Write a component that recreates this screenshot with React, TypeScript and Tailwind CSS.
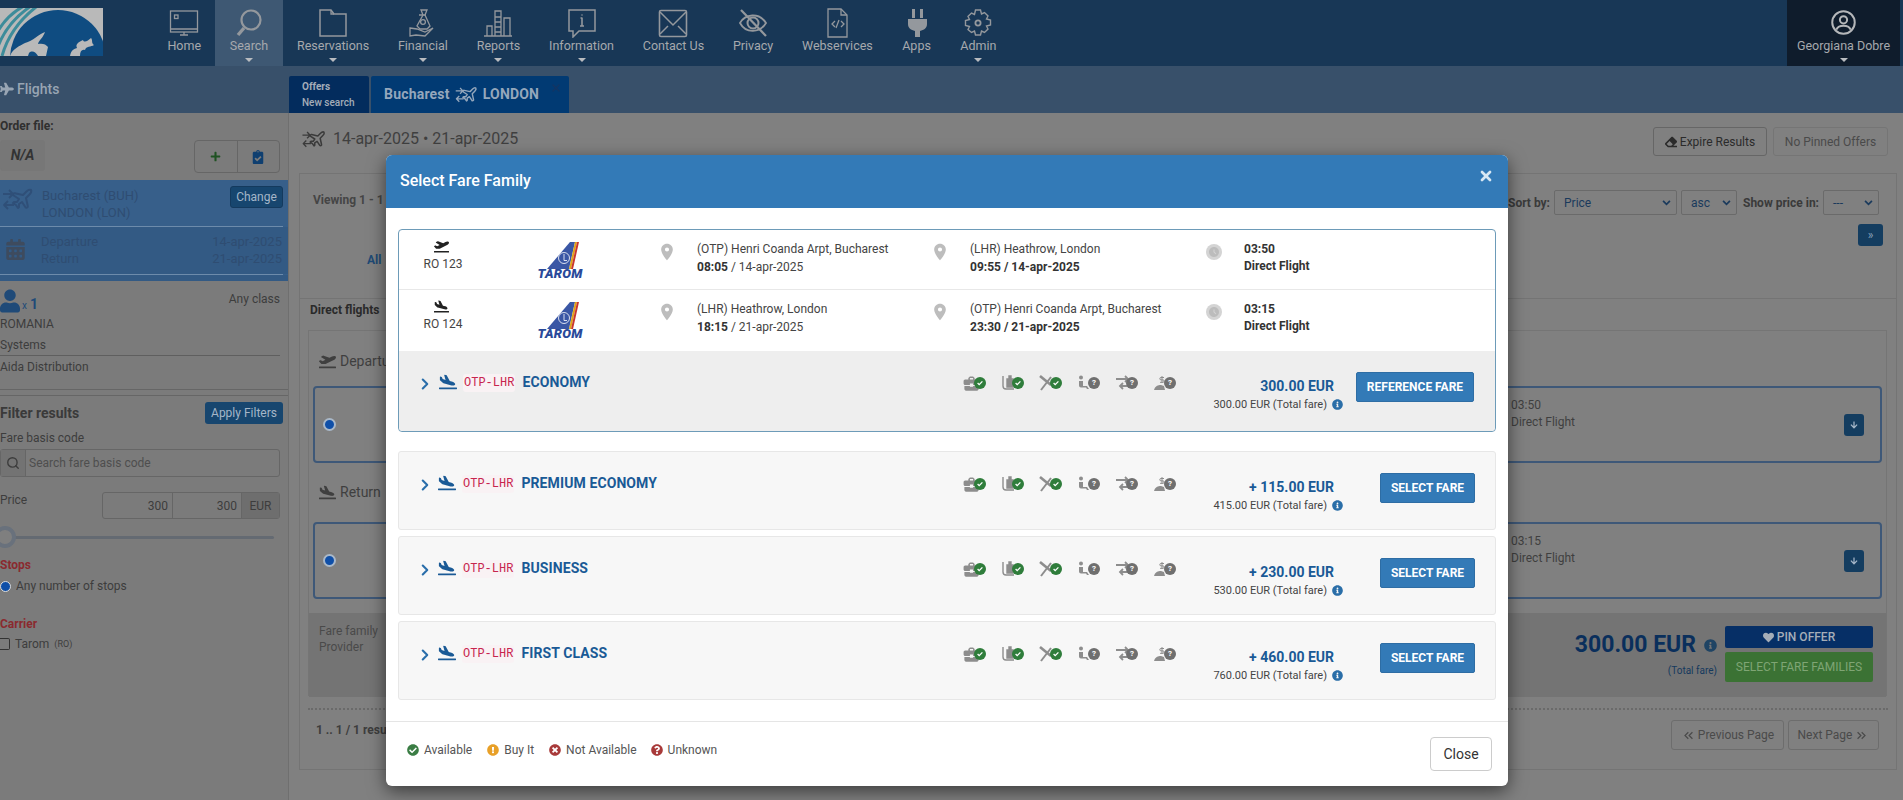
import type { ReactNode } from "react";
import { ChevronRight, Search, X } from "lucide-react";
import {
  FaArrowDown,
  FaCalendarAlt,
  FaCheckCircle,
  FaClipboardCheck,
  FaEraser,
  FaExclamationCircle,
  FaHeart,
  FaInfoCircle,
  FaPlane,
  FaPlaneArrival,
  FaPlaneDeparture,
  FaPlus,
  FaQuestionCircle,
  FaTimesCircle,
  FaUser,
} from "react-icons/fa";
import {
  MdAccessTimeFilled,
  MdBusinessCenter,
  MdKeyboardDoubleArrowLeft,
  MdKeyboardDoubleArrowRight,
  MdPlace,
} from "react-icons/md";

function Line({ children }: { children: ReactNode }) {
  return (
    <svg viewBox="0 0 30 30" className="h-[30px] w-[30px]" fill="none" stroke="currentColor" strokeWidth="1.3">
      {children}
    </svg>
  );
}

const navItems: { label: string; caret?: boolean; active?: boolean; icon: ReactNode }[] = [
  {
    label: "Home",
    icon: (
      <Line>
        <rect x="1.5" y="3" width="27" height="21" />
        <path d="M1.5 21h27M11 27h8M15 24v3" />
        <rect x="5.5" y="7" width="3.5" height="3.5" />
      </Line>
    ),
  },
  {
    label: "Search",
    caret: true,
    active: true,
    icon: (
      <Line>
        <circle cx="17" cy="12" r="9.5" strokeWidth="2.2" />
        <path d="M10 20l-6 7" strokeWidth="3.4" />
      </Line>
    ),
  },
  {
    label: "Reservations",
    caret: true,
    icon: (
      <Line>
        <path d="M2 28V2h11l3 4h12v22z" strokeWidth="1.5" />
        <path d="M13 2v4h3" />
      </Line>
    ),
  },
  {
    label: "Financial",
    caret: true,
    icon: (
      <Line>
        <path d="M13 2l6 0-2 5 5 11-3 3h-7l-3-3 6-11z" />
        <path d="M11 7h7M2 20l7 1 8 3 8-4-8 8-9-1-6 1z" />
        <circle cx="15" cy="14" r="2.4" />
      </Line>
    ),
  },
  {
    label: "Reports",
    caret: true,
    icon: (
      <Line>
        <path d="M1 28h28M4 28V18h5v10M12 28V3h6v25M21 28V10h6v18" />
        <path d="M12 9h6M12 14h6M12 19h6M12 24h6" />
      </Line>
    ),
  },
  {
    label: "Information",
    caret: true,
    icon: (
      <Line>
        <path d="M2 2h26v21H12l-6 6v-6H2z" strokeWidth="1.5" />
        <path d="M15 10v8M13 18h4M13.5 10h2M15 6.5v1" strokeWidth="1.6" />
      </Line>
    ),
  },
  {
    label: "Contact Us",
    icon: (
      <Line>
        <rect x="1.5" y="2.5" width="27" height="26" rx="1.5" strokeWidth="1.6" />
        <path d="M2 4l13 13L28 4M2 26l8-8M28 26l-8-8" strokeWidth="1.5" />
      </Line>
    ),
  },
  {
    label: "Privacy",
    icon: (
      <Line>
        <path d="M2 15c5-9 19-11 26 0-6 10-20 11-26 0z" strokeWidth="1.8" />
        <circle cx="15" cy="15" r="5.5" strokeWidth="2" />
        <path d="M3 2l25 26" strokeWidth="2.2" />
      </Line>
    ),
  },
  {
    label: "Webservices",
    icon: (
      <Line>
        <path d="M6 1h13l6 6v22H6z" />
        <path d="M19 1v6h6M13 13l-3 3 3 3M19 13l3 3-3 3M17 12l-3 8" />
      </Line>
    ),
  },
  {
    label: "Apps",
    icon: (
      <svg viewBox="0 0 30 30" className="h-[30px] w-[30px]" fill="currentColor">
        <path d="M10 1h3v9h-3zM18 1h3v9h-3zM6 11h19v5c0 4-3 6-7 7v6h-5v-6c-4-1-7-3-7-7z" />
      </svg>
    ),
  },
  {
    label: "Admin",
    caret: true,
    icon: (
      <Line>
        <path
          d="M12.5 2h5l1 4 3-1.500 3.500 3.500-1.500 3 4 1v5l-4 1 1.500 3-3.500 3.500-3-1.500-1 4h-5l-1-4-3 1.500L5 21.500l1.500-3-4-1v-5l4-1-1.500-3L8.500 5l3 1.500z"
          strokeWidth="1.4"
        />
        <circle cx="15" cy="15" r="2.600" strokeWidth="1.8" />
      </Line>
    ),
  },
];

function Caret() {
  return <span className="mx-auto block h-0 w-0 border-x-[4px] border-t-[4px] border-x-transparent border-t-[#b9bcc0]" />;
}

function RoundTrip({ className }: { className: string }) {
  return (
    <svg viewBox="0 0 32 26" className={className} fill="none" stroke="currentColor" strokeWidth="2" strokeLinejoin="round">
      <path transform="translate(8 1)" d="M17.800 19.200 16 11l3.500-3.500C21 6 21.500 4 21 3c-1-.5-3 0-4.500 1.500L13 8 4.800 6.200c-.5-.1-.9.1-1.100.5l-.3.5c-.2.5-.1 1 .3 1.300L9 12l-2 3H4l-1 1 3 2 2 3 1-1v-3l3-2 3.500 5.300c.3.4.8.5 1.300.3l.5-.2c.4-.3.6-.7.5-1.200z" />
      <path d="M1 8h9M7 4l4 4-4 4M12 19H2M6 15l-4 4 4 4" strokeWidth="1.8" />
    </svg>
  );
}

function Logo() {
  return (
    <svg viewBox="0 0 103 48" className="h-12 w-[103px]">
      <rect width="103" height="48" fill="#b9b9b9" />
      <path d="M-12 48C-6 24 6 6 28 -4M-5 48C0 28 12 10 34 -4M2 48C7 30 18 12 40 -4" fill="none" stroke="#3d8c9a" strokeWidth="3" />
      <circle cx="58" cy="50" r="48" fill="#0f4c81" />
      <path d="M10 48c3-8 10-10 15-13 8-2 14-9 20-11-2 6-6 8-7 12 4-1 8 0 10 3l-2 9h-8c-2-4-6-6-9-3l-1 3z" fill="#b9b9b9" />
      <path d="M70 48c1-5 3-7 7-8-2-4 2-6 6-8 1 3 5 1 8-2 2 2 0 5 3 7-3 2-8 1-9 5-3-1-5 1-5 6z" fill="#b9b9b9" />
    </svg>
  );
}

function TopNav() {
  return (
    <div className="flex h-[66px] shrink-0 bg-[#183756] text-[#a6a9ad]">
      <div className="w-[153px] pt-2">
        <Logo />
      </div>
      <div className="flex flex-1">
        {navItems.map((item) => (
          <div key={item.label} className={`flex flex-col items-center px-[14.400px] pt-[9px] ${item.active ? "bg-[#3e5873]" : ""}`}>
            <div className="flex h-[27px] w-[30px] items-center justify-center text-[#94989d]">{item.icon}</div>
            <div className="mt-[2px] whitespace-nowrap text-[12.500px] leading-[15px]">{item.label}</div>
            {item.caret && <div className="mt-[5px]"><Caret /></div>}
          </div>
        ))}
      </div>
      <div className="mr-[3px] flex w-[113px] flex-col items-center bg-[#0f1c2c] pt-[9px]">
        <svg viewBox="0 0 30 30" className="h-[27px] w-[27px]" fill="none" stroke="#b5b7ba" strokeWidth="2.2">
          <circle cx="15" cy="15" r="12.500" />
          <circle cx="15" cy="12" r="4" />
          <path d="M7 23c2-6 14-6 16 0" />
        </svg>
        <div className="mt-[2px] whitespace-nowrap text-[12.500px] leading-[15px]">Georgiana Dobre</div>
        <div className="mt-[5px]"><Caret /></div>
      </div>
    </div>
  );
}

function SubBar() {
  return (
    <div className="flex h-[47px] shrink-0 bg-[#38506a]">
      <div className="flex w-[289px] items-center gap-[3px] pb-px text-[14px] font-medium text-[#98a5b3]">
        <FaPlane className="h-[14px] w-[14px]" />
        Flights
      </div>
      <div className="mt-[10px] flex h-[37px] w-[80px] flex-col justify-center rounded-t-[2px] bg-[#032c5d] pl-[13px] text-[10px] leading-[16px] text-[#a4adb8]">
        <span className="font-bold">Offers</span>
        <span className="font-medium">New search</span>
      </div>
      <div className="relative ml-[2px] mt-[10px] flex h-[37px] w-[198px] items-center gap-[5px] rounded-t-[2px] bg-[#013a73] pl-[13px] text-[14px] font-bold tracking-[0.2px] text-[#95a7bc]">
        Bucharest
        <RoundTrip className="h-[19px] w-[23px]" />
        LONDON
        <X className="absolute right-[7px] top-[6px] h-3 w-3 text-[#123564]" strokeWidth={3} />
      </div>
    </div>
  );
}

function Sidebar() {
  return (
    <aside className="w-[289px] shrink-0 border-r border-[#6f6f6f] bg-[#7b7b7b] text-[12px] text-[#3d3d3d]">
      <div className="pt-[6px] font-bold leading-[14px] text-[#2f2f2f]">Order file:</div>
      <div className="mt-[7px] flex items-start justify-between pr-[8px]">
        <div className="flex h-[31px] w-[45px] items-center justify-center rounded-[3px] border border-[#777] bg-[#777] text-[14px] font-bold italic text-[#333]">N/A</div>
        <div className="flex h-[33px] w-[86px] rounded-[4px] border border-[#666]">
          <div className="flex flex-1 items-center justify-center border-r border-[#666] text-[#1f5222]"><FaPlus className="h-[11px] w-[11px]" /></div>
          <div className="flex flex-1 items-center justify-center text-[#0f3f70]"><FaClipboardCheck className="h-[14px] w-[14px]" /></div>
        </div>
      </div>
      <div className="mt-[7px] h-[101px] bg-[#375f8a] text-[13px] leading-[17px] text-[#2f4d72]">
        <div className="flex h-[46px] items-start pl-0 pr-[5px] pt-[6px]">
          <RoundTrip className="h-[26px] w-[36px] text-[#2f4f78]" />
          <div className="ml-[6px] flex-1 pt-px">
            <div>Bucharest (BUH)</div>
            <div>LONDON (LON)</div>
          </div>
          <div className="flex h-[22px] w-[53px] items-center justify-center rounded-[3px] border border-[#143a5e] bg-[#17466f] text-[12px] text-[#a5b6c8]">Change</div>
        </div>
        <div className="mr-[5px] h-px bg-[#6d8bab]" />
        <div className="flex h-[47px] items-center bg-[#335a84] pb-[2px] pr-[6px]">
          <FaCalendarAlt className="ml-[5px] h-[21px] w-[21px] text-[#3e4b5e]" />
          <div className="ml-[15px] flex-1">
            <div>Departure</div>
            <div>Return</div>
          </div>
          <div className="text-right">
            <div>14-apr-2025</div>
            <div>21-apr-2025</div>
          </div>
        </div>
        <div className="mr-[5px] h-px bg-[#6d8bab]" />
        <div className="h-[6px] bg-[#335a84]" />
      </div>
      <div className="mt-[8px] flex items-start justify-between pr-[8px]">
        <div className="flex items-end">
          <FaUser className="h-[24px] w-[20px] text-[#1f4a78]" />
          <span className="ml-[2px] text-[10px] text-[#1f4a78]">x</span>
          <span className="ml-[3px] text-[14px] font-bold leading-[17px] text-[#1f4a78]">1</span>
        </div>
        <span className="pt-[1px]">Any class</span>
      </div>
      <div className="mt-[2px] leading-[18px]">ROMANIA</div>
      <div className="mr-[8px] mt-[3px] border-b border-[#5f5f5f] pb-[1px] leading-[18px]">Systems</div>
      <div className="mt-[2px] leading-[18px]">Aida Distribution</div>
      <div className="mt-[13px] h-[7px] border-y border-[#666]" />
      <div className="mt-[6px] flex items-center justify-between pr-[5px]">
        <span className="text-[14px] font-bold text-[#3a3a3a]">Filter results</span>
        <span className="flex h-[22px] w-[78px] items-center justify-center rounded-[3px] bg-[#17466f] text-[12px] text-[#a5b6c8]">Apply Filters</span>
      </div>
      <div className="mt-[6px] leading-[16px]">Fare basis code</div>
      <div className="mr-[8px] mt-[3px] flex h-[28px] rounded-[3px] border border-[#666]">
        <div className="flex w-[25px] items-center justify-center border-r border-[#666] bg-[#737373]"><Search className="h-[14px] w-[14px]" strokeWidth={2.4} /></div>
        <div className="flex flex-1 items-center pl-[3px] text-[#4e4e4e]">Search fare basis code</div>
      </div>
      <div className="mt-[15px] flex items-start justify-between pr-[8px]">
        <span className="-mt-[1px]">Price</span>
        <div className="flex h-[27px] w-[178px] rounded-[3px] border border-[#666]">
          <div className="flex w-[70px] items-center justify-end border-r border-[#666] pr-[4px]">300</div>
          <div className="flex w-[69px] items-center justify-end border-r border-[#666] pr-[4px]">300</div>
          <div className="flex flex-1 items-center justify-center bg-[#6e6e6e]">EUR</div>
        </div>
      </div>
      <div className="relative mr-[14px] mt-[17px] h-[3px] rounded-full bg-[#646a72]">
        <span className="absolute -left-[6px] -top-[10px] h-[22px] w-[22px] rounded-full border-[4px] border-[#69717c] bg-[#7f7f7f]" />
      </div>
      <div className="mt-[19px] font-bold leading-[14px] text-[#8a2a2f]">Stops</div>
      <div className="mt-[6px] flex items-center gap-[5px] leading-[16px]">
        <span className="h-[11px] w-[11px] rounded-full border border-[#ddd] bg-[#0f4fa8]" />
        Any number of stops
      </div>
      <div className="mt-[23px] font-bold leading-[14px] text-[#8a2a2f]">Carrier</div>
      <div className="mt-[5px] flex items-center gap-[5px] leading-[16px]">
        <span className="h-[12px] w-[10px] rounded-r-[2px] border border-l-0 border-[#333]" />
        Tarom <span className="text-[9px]">(RO)</span>
      </div>
    </aside>
  );
}

function ResultBox({ time, flight }: { time: string; flight: string }) {
  return (
    <div className="flex h-[77px] items-center justify-between rounded-[4px] border-2 border-[#3e5878] pl-[8px] pr-[16px]">
      <span className="h-[13px] w-[13px] rounded-full border-[2px] border-[#a9b8c9] bg-[#0f4fa8]" />
      <div className="flex items-center">
        <div className="mb-[22px] mr-[263px] w-[70px] text-[12px] leading-[17px] text-[#3f3f3f]">
          <div>{time}</div>
          <div>{flight}</div>
        </div>
        <span className="flex h-[22px] w-[20px] items-center justify-center rounded-[3px] bg-[#143d60] text-[#a5b6c8]"><FaArrowDown className="h-[8px] w-[8px]" /></span>
      </div>
    </div>
  );
}

function Select({ width, value }: { width: string; value: string }) {
  return (
    <div className={`flex h-[25px] ${width} items-center justify-between rounded-[2px] border border-[#6a6a6a] pl-[9px] pr-[5px] text-[#1a3a5c]`}>
      {value}
      <svg viewBox="0 0 10 7" className="h-[6px] w-[9px]" fill="none" stroke="#1a3a5c" strokeWidth="2"><path d="M1 1l4 4 4-4" /></svg>
    </div>
  );
}

function MainPanel() {
  return (
    <main className="min-w-0 flex-1 text-[12px] text-[#3d3d3d]">
      <div className="flex h-[60px] items-start justify-between pl-[12px] pr-[15px] pt-[14px]">
        <div className="flex items-center gap-[6px] text-[16px] leading-[24px] text-[#3f3f3f]">
          <RoundTrip className="h-[20px] w-[26px] text-[#3a3a3a]" />
          14-apr-2025 • 21-apr-2025
        </div>
        <div className="flex gap-[6px]">
          <div className="flex h-[29px] w-[114px] items-center justify-center gap-[3px] rounded-[3px] border border-[#666] text-[#2b2b2b]">
            <FaEraser className="h-[12px] w-[12px]" />
            Expire Results
          </div>
          <div className="flex h-[29px] w-[115px] items-center justify-center rounded-[3px] border border-[#757575] text-[#4a4a4a]">No Pinned Offers</div>
        </div>
      </div>
      <div className="ml-[10px] mr-[6px] h-[597px] border border-[#747474]">
        <div className="flex h-[125px] justify-between border-b border-[#747474]">
          <div className="pl-[13px] pt-[17px] font-bold text-[#454545]">
            Viewing 1 - 1
            <div className="ml-[54px] mt-[42px] text-[#1e4a75]">All</div>
          </div>
          <div className="flex flex-col items-end pr-[17px] pt-[16px]">
            <div className="flex items-center gap-[4px]">
              <span className="font-bold text-[#3a3a3a]">Sort by:</span>
              <Select width="w-[123px]" value="Price" />
              <Select width="w-[56px]" value="asc" />
              <span className="ml-[2px] font-bold text-[#3a3a3a]">Show price in:</span>
              <Select width="w-[56px]" value="---" />
            </div>
            <span className="-mr-[4px] mt-[9px] flex h-[22px] w-[25px] items-center justify-center rounded-[3px] bg-[#143d60] text-[#88a0b8]">»</span>
          </div>
        </div>
        <div className="pl-[10px] pt-[3px] font-bold leading-[16px] text-[#2a2a2a]">Direct flights</div>
        <div className="ml-[8px] mr-[9px] mt-[12px] h-[366px] border border-[#757575]">
          <div className="flex h-[55px] items-center gap-[4px] pl-[10px] pt-[5px] text-[14px] text-[#3f3f3f]"><FaPlaneDeparture className="h-[17px] w-[17px]" />Departure</div>
          <div className="px-[4px]"><ResultBox time="03:50" flight="Direct Flight" /></div>
          <div className="flex h-[59px] items-center gap-[4px] pl-[10px] text-[14px] text-[#3f3f3f]"><FaPlaneArrival className="h-[17px] w-[17px]" />Return</div>
          <div className="px-[4px]"><ResultBox time="03:15" flight="Direct Flight" /></div>
          <div className="mt-[14px] flex h-[84px] items-start justify-between bg-[#747474] pl-[10px] pr-[13px] pt-[10px]">
            <div className="leading-[16px] text-[#4a4a4a]">
              <div>Fare family</div>
              <div>Provider</div>
            </div>
            <div className="flex pt-[3px]">
              <div className="pt-[6px] text-right">
                <div className="flex items-center text-[23px] font-bold leading-[26px] text-[#0a2f5c]">
                  300.00 EUR
                  <FaInfoCircle className="ml-[8px] h-[13px] w-[13px] text-[#1f4464]" />
                </div>
                <div className="mt-[5px] text-[10px] text-[#15395e]">(Total fare)</div>
              </div>
              <div className="ml-[8px] w-[148px] text-[12px]">
                <div className="flex h-[22px] items-center justify-center gap-[3px] rounded-[2px] bg-[#062f66] font-medium text-[#a4adb8]"><FaHeart className="h-[11px] w-[11px]" />PIN OFFER</div>
                <div className="mt-[4px] flex h-[30px] items-center justify-center rounded-[2px] bg-[#3b7234] text-[#7fa574]">SELECT FARE FAMILIES</div>
              </div>
            </div>
          </div>
        </div>
        <div className="mx-[8px] mt-[12px] border-t-2 border-dotted border-[#6a6a6a]" />
        <div className="flex items-start justify-between pl-[16px] pr-[17px] pt-[10px]">
          <span className="pt-[1px] font-bold text-[#3d3d3d]">1 .. 1 / 1 results</span>
          <div className="flex gap-[4px] text-[#4a4a4a]">
            <div className="flex h-[30px] w-[113px] items-center justify-center gap-[2px] rounded-[3px] border border-[#6d6d6d]"><MdKeyboardDoubleArrowLeft className="h-[15px] w-[15px]" />Previous Page</div>
            <div className="flex h-[30px] w-[91px] items-center justify-center gap-[2px] rounded-[3px] border border-[#6d6d6d]">Next Page<MdKeyboardDoubleArrowRight className="h-[15px] w-[15px]" /></div>
          </div>
        </div>
      </div>
    </main>
  );
}

function TaromLogo() {
  return (
    <div className="flex w-[46px] flex-col items-center">
      <svg viewBox="0 0 46 28" className="h-[28px] w-[46px]">
        <path d="M10 28L33 1h5l-6 27z" fill="#3a57a5" />
        <path d="M38 1h2l-6 27h-2z" fill="#e0a417" />
        <path d="M40 1h2l-6 27h-2z" fill="#c8362e" />
        <circle cx="27" cy="17" r="5.500" fill="none" stroke="#fff" strokeWidth="0.8" />
        <path d="M27 13v6.500h3" fill="none" stroke="#fff" strokeWidth="0.8" />
      </svg>
      <span className="text-[13px] font-black italic leading-[9px] tracking-[0.2px] text-[#2a4a9a]">TAROM</span>
    </div>
  );
}

function LegRow({ code, arrive, from, fromWhen, to, toWhen, duration, top }: {
  code: string;
  arrive?: boolean;
  from: string;
  fromWhen: [string, string];
  to: string;
  toWhen: string;
  duration: string;
  top?: boolean;
}) {
  const PlaneIcon = arrive ? FaPlaneArrival : FaPlaneDeparture;
  return (
    <div className={`grid grid-cols-[88px_168px_42px_231px_42px_231px_43px_1fr] pt-[9px] text-[12px] leading-[19px] text-[#444] ${top ? "h-[60px] border-b border-[#e8e8e8]" : "h-[61px]"}`}>
      <div className="flex flex-col items-center text-[#444]">
        <PlaneIcon className="mb-[1px] mr-[4px] h-[15px] w-[15px] text-[#222]" />
        {code}
      </div>
      <div className="pl-[50px] pt-[2px]"><TaromLogo /></div>
      <div className="pl-[2px] pt-[3px]"><MdPlace className="h-[20px] w-[20px] text-[#bdbdbd]" /></div>
      <div className="pt-px">
        {from}
        <div className="-mt-px"><b className="font-bold text-[#333]">{fromWhen[0]}</b> / {fromWhen[1]}</div>
      </div>
      <div className="pl-[2px] pt-[3px]"><MdPlace className="h-[20px] w-[20px] text-[#bdbdbd]" /></div>
      <div className="pt-px">
        {to}
        <div className="-mt-px font-bold text-[#333]">{toWhen}</div>
      </div>
      <div className="pl-[5px] pt-[5px]"><span className="flex h-[16px] w-[16px] items-center justify-center rounded-full bg-[#d4d4d4]"><MdAccessTimeFilled className="h-[12px] w-[12px] text-[#bcbcbc]" /></span></div>
      <div className="pt-px font-bold text-[#333]">
        {duration}
        <div className="-mt-[2px]">Direct Flight</div>
      </div>
    </div>
  );
}

function Feature({ icon, ok }: { icon: ReactNode; ok?: boolean }) {
  return (
    <div className="relative h-[16px] w-[23px] text-[#8d8d8d]">
      {icon}
      <span className={`absolute right-0 top-[2px] flex h-[12px] w-[12px] items-center justify-center rounded-full text-[8px] font-bold leading-none text-white ${ok ? "bg-[#2f7d3b]" : "bg-[#6f6f6f]"}`}>
        {ok ? (
          <svg viewBox="0 0 10 10" className="h-[8px] w-[8px]" fill="none" stroke="#fff" strokeWidth="1.6"><path d="M2 5l2 2 4-4" /></svg>
        ) : "?"}
      </span>
    </div>
  );
}

const featureIcon = "absolute left-0 top-0 h-[16px] w-[18px]";

const features: { ok?: boolean; icon: ReactNode }[] = [
  { ok: true, icon: <MdBusinessCenter className="absolute -left-[1px] -top-[1px] h-[19px] w-[19px]" /> },
  {
    ok: true,
    icon: (
      <svg viewBox="0 0 18 16" className={featureIcon} fill="none" stroke="currentColor" strokeWidth="1.4">
        <path d="M2 1v10c0 2 1 3 3 3h8" />
        <path d="M6 4h6v8H6zM8 4V1h2v3" fill="currentColor" />
      </svg>
    ),
  },
  {
    ok: true,
    icon: (
      <svg viewBox="0 0 18 16" className={featureIcon} fill="none" stroke="currentColor" strokeWidth="2.6">
        <path d="M1 1l11 9" />
        <path d="M12 2L2 15" strokeWidth="2" />
      </svg>
    ),
  },
  {
    icon: (
      <svg viewBox="0 0 18 16" className={featureIcon} fill="currentColor">
        <circle cx="4" cy="2.500" r="2" />
        <path d="M2 6h4v5h4l2 3h-2l-1-1.500H4a2 2 0 0 1-2-2z" />
      </svg>
    ),
  },
  {
    icon: (
      <svg viewBox="0 0 18 16" className={featureIcon} fill="none" stroke="currentColor" strokeWidth="1.8">
        <path d="M1 4h12M10 1l3 3-3 3M17 11H5M8 8l-3 3 3 3" />
      </svg>
    ),
  },
  {
    icon: (
      <svg viewBox="0 0 18 16" className={featureIcon} fill="currentColor">
        <path d="M1 15c1-4 4-5 7-5l3 1 1 4z" />
        <path d="M9 1v7M11 2.500H8a1.200 1.200 0 0 0 0 2.400h2a1.200 1.200 0 0 1 0 2.400H7" fill="none" stroke="currentColor" strokeWidth="1" />
      </svg>
    ),
  },
];

function FareRow({ name, price, total, button, highlighted }: {
  name: string;
  price: string;
  total: string;
  button: string;
  highlighted?: boolean;
}) {
  return (
    <div className="flex items-start">
      <div className="flex flex-1 items-center pl-[17px] pt-[19px]">
        <ChevronRight className="mt-[5px] h-[18px] w-[18px] text-[#2a6eaa]" strokeWidth={2.8} />
        <FaPlaneArrival className={`h-[18px] w-[18px] text-[#1a5a96] ${highlighted ? "ml-[5px]" : "ml-[4px]"}`} />
        <code className="ml-[6px] mt-[2px] rounded-[3px] bg-[#f9f2f4] px-[1px] text-[12px] leading-[18px] text-[#c7254e] [font-family:'Liberation_Mono',monospace]">OTP-LHR</code>
        <span className="ml-[7px] text-[14px] font-bold leading-[18px] tracking-[0.1px] text-[#1a5a96]">{name}</span>
      </div>
      <div className="grid w-[228px] grid-cols-6 pt-[24px]">
        {features.map((feature, index) => (
          <Feature key={index} ok={feature.ok} icon={feature.icon} />
        ))}
      </div>
      <div className="w-[152px] pt-[27px] text-right">
        <div className="pr-[9px] text-[14px] font-bold leading-[17px] text-[#1a5a96]">{price}</div>
        <div className="mt-[2px] flex items-center justify-end gap-[5px] text-[11px] leading-[15px] text-[#444]">
          {total} (Total fare)
          <FaInfoCircle className="h-[11px] w-[11px] text-[#2a6ea8]" />
        </div>
      </div>
      <div className={`flex w-[152px] justify-end pt-[21px] ${highlighted ? "pr-[21px]" : "pr-[20px]"}`}>
        <span className={`flex h-[30px] items-center justify-center rounded-[2px] border border-[#2e6da4] bg-[#337ab7] text-[12px] font-bold text-white ${highlighted ? "w-[118px]" : "w-[95px]"}`}>{button}</span>
      </div>
    </div>
  );
}

const legend = [
  { label: "Available", icon: <FaCheckCircle className="h-[12px] w-[12px] text-[#3a7d44]" />, gap: "mr-[15px]" },
  { label: "Buy It", icon: <FaExclamationCircle className="h-[12px] w-[12px] text-[#e8a028]" />, gap: "mr-[15px]" },
  { label: "Not Available", icon: <FaTimesCircle className="h-[12px] w-[12px] text-[#a83a3a]" />, gap: "mr-[14px]" },
  { label: "Unknown", icon: <FaQuestionCircle className="h-[12px] w-[12px] text-[#a83a3a]" />, gap: "" },
];

function FareModal() {
  return (
    <div className="absolute left-[386px] top-[155px] h-[631px] w-[1122px] rounded-[6px] bg-white shadow-[0_5px_18px_rgba(0,0,0,0.55)]">
      <div className="flex h-[53px] items-center justify-between rounded-t-[6px] bg-[#337ab7] pl-[14px] pr-[14px]">
        <span className="-mt-px text-[16px] font-medium text-white">Select Fare Family</span>
        <X className="-mt-[11px] h-[16px] w-[16px] text-[#d8e8f4]" strokeWidth={4} />
      </div>
      <div className="h-[513px] px-[12px] pt-[21px]">
        <div className="h-[203px] rounded-[4px] border border-[#6d9bb8]">
          <LegRow top code="RO 123" from="(OTP) Henri Coanda Arpt, Bucharest" fromWhen={["08:05", "14-apr-2025"]} to="(LHR) Heathrow, London" toWhen="09:55 / 14-apr-2025" duration="03:50" />
          <LegRow code="RO 124" arrive from="(LHR) Heathrow, London" fromWhen={["18:15", "21-apr-2025"]} to="(OTP) Henri Coanda Arpt, Bucharest" toWhen="23:30 / 21-apr-2025" duration="03:15" />
          <div className="h-[80px] rounded-b-[4px] bg-[#eeeeee]">
            <FareRow highlighted name="ECONOMY" price="300.00 EUR" total="300.00 EUR" button="REFERENCE FARE" />
          </div>
        </div>
        <div className="mt-[19px] flex flex-col gap-[6px]">
          {[
            { name: "PREMIUM ECONOMY", price: "+ 115.00 EUR", total: "415.00 EUR" },
            { name: "BUSINESS", price: "+ 230.00 EUR", total: "530.00 EUR" },
            { name: "FIRST CLASS", price: "+ 460.00 EUR", total: "760.00 EUR" },
          ].map((fare) => (
            <div key={fare.name} className="h-[79px] rounded-[3px] border border-[#e7e7e7] bg-[#f7f7f7]">
              <FareRow name={fare.name} price={fare.price} total={fare.total} button="SELECT FARE" />
            </div>
          ))}
        </div>
      </div>
      <div className="flex h-[65px] items-start justify-between border-t border-[#e5e5e5] pl-[21px] pr-[16px]">
        <div className="flex pt-[20px] text-[12px] leading-[16px] text-[#555]">
          {legend.map((item) => (
            <div key={item.label} className={`flex items-center gap-[5px] ${item.gap}`}>
              {item.icon}
              {item.label}
            </div>
          ))}
        </div>
        <div className="mt-[15px] flex h-[34px] w-[62px] items-center justify-center rounded-[4px] border border-[#cccccc] text-[14px] text-[#333]">Close</div>
      </div>
    </div>
  );
}

export default function App() {
  return (
    <div className="relative flex h-[800px] w-full flex-col overflow-hidden bg-[#808080] [font-family:Roboto,sans-serif]">
      <TopNav />
      <SubBar />
      <div className="flex min-h-0 flex-1">
        <Sidebar />
        <MainPanel />
      </div>
      <FareModal />
    </div>
  );
}
